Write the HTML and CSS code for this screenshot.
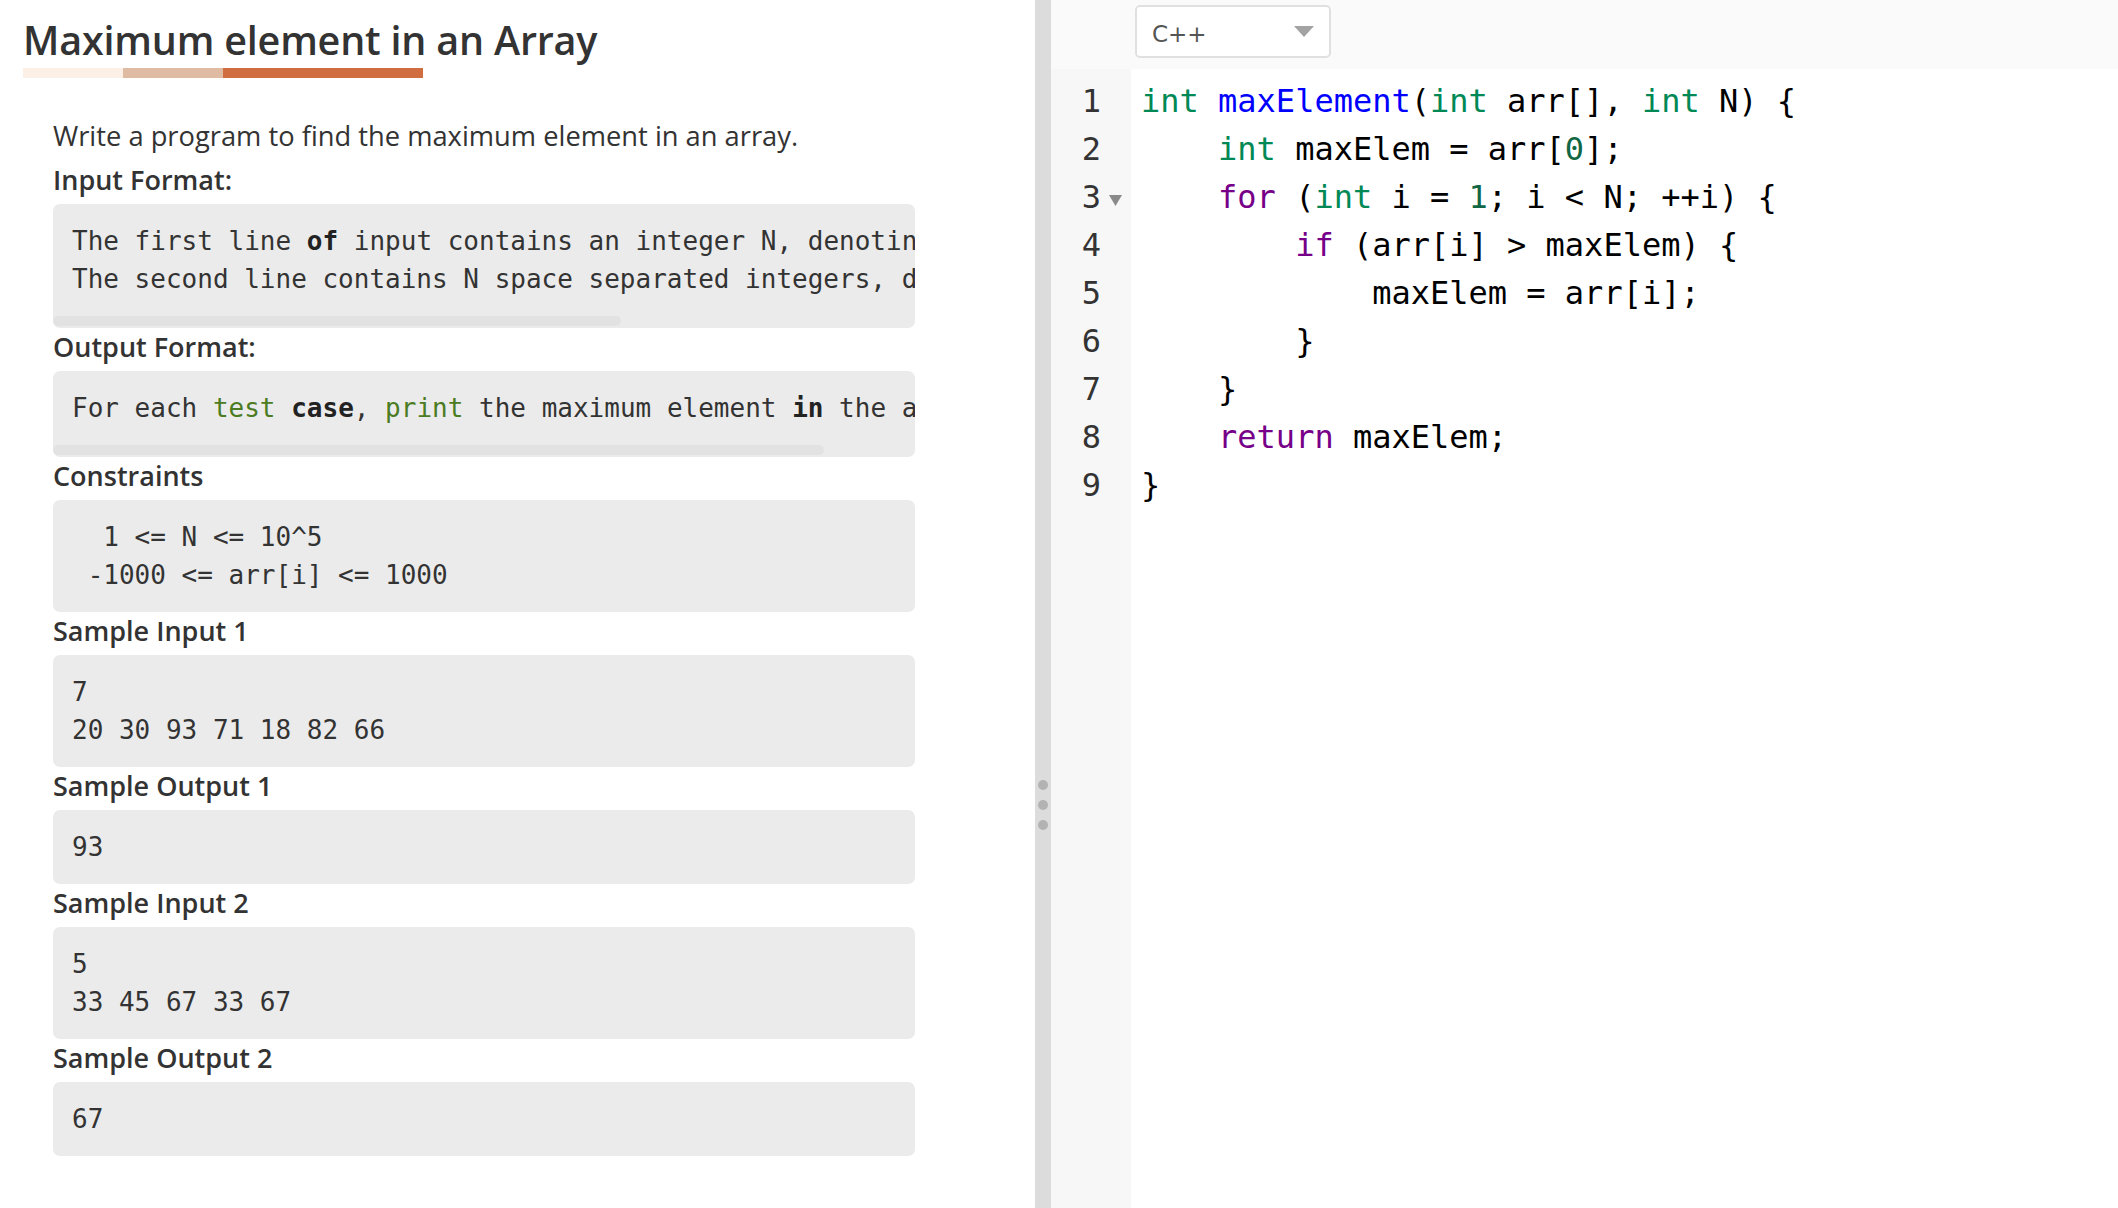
FILE: index.html
```html
<!DOCTYPE html>
<html lang="en">
<head>
<meta charset="utf-8">
<title>Maximum element in an Array</title>
<link rel="stylesheet" href="styles.css">
</head>
<body>
<div class="app">
  <section class="problem">
    <header class="head">
      <h1 class="title">Maximum element in an Array</h1>
      <div class="bars"><span class="bar bar-1"></span><span class="bar bar-2"></span><span class="bar bar-3"></span></div>
    </header>
    <div class="content">
      <p class="desc">Write a program to find the maximum element in an array.</p>
      <h3 class="label">Input Format:</h3>
      <div class="block">
        <pre class="block-text">The first line <b>of</b> input contains an integer N, denoting the size <b>of</b> the array.
The second line contains N space separated integers, denoting the array elements.</pre>
        <div class="hbar"><span class="thumb" style="width:568px"></span></div>
      </div>
      <h3 class="label">Output Format:</h3>
      <div class="block">
        <pre class="block-text">For each <span class="g">test</span> <b>case</b>, <span class="g">print</span> the maximum element <b>in</b> the array.</pre>
        <div class="hbar"><span class="thumb" style="width:771px"></span></div>
      </div>
      <h3 class="label">Constraints</h3>
      <div class="block">
        <pre class="block-text">  1 &lt;= N &lt;= 10^5
 -1000 &lt;= arr[i] &lt;= 1000</pre>
      </div>
      <h3 class="label">Sample Input 1</h3>
      <div class="block">
        <pre class="block-text">7
20 30 93 71 18 82 66</pre>
      </div>
      <h3 class="label">Sample Output 1</h3>
      <div class="block">
        <pre class="block-text">93</pre>
      </div>
      <h3 class="label">Sample Input 2</h3>
      <div class="block">
        <pre class="block-text">5
33 45 67 33 67</pre>
      </div>
      <h3 class="label">Sample Output 2</h3>
      <div class="block">
        <pre class="block-text">67</pre>
      </div>
    </div>
  </section>
  <div class="divider"><span class="dot"></span><span class="dot"></span><span class="dot"></span></div>
  <section class="editor">
    <div class="toolbar">
      <div class="select">
        <span class="select-text">C++</span>
        <svg class="caret" width="20" height="11" viewBox="0 0 20 11"><polygon points="0,0 20,0 10,11" fill="#a3a3a3"/></svg>
      </div>
    </div>
    <div class="code">
      <div class="gutter">
        <div class="gl"><span class="num">1</span><span class="fold"></span></div>
        <div class="gl"><span class="num">2</span><span class="fold"></span></div>
        <div class="gl"><span class="num">3</span><span class="fold"><svg width="13" height="11" viewBox="0 0 13 11"><polygon points="0,0 13,0 6.5,11" fill="#8a8a8a"/></svg></span></div>
        <div class="gl"><span class="num">4</span><span class="fold"></span></div>
        <div class="gl"><span class="num">5</span><span class="fold"></span></div>
        <div class="gl"><span class="num">6</span><span class="fold"></span></div>
        <div class="gl"><span class="num">7</span><span class="fold"></span></div>
        <div class="gl"><span class="num">8</span><span class="fold"></span></div>
        <div class="gl"><span class="num">9</span><span class="fold"></span></div>
      </div>
<pre class="lines"><span class="t">int</span> <span class="d">maxElement</span>(<span class="t">int</span> arr[], <span class="t">int</span> N) {
    <span class="t">int</span> maxElem = arr[<span class="n">0</span>];
    <span class="k">for</span> (<span class="t">int</span> i = <span class="n">1</span>; i &lt; N; ++i) {
        <span class="k">if</span> (arr[i] &gt; maxElem) {
            maxElem = arr[i];
        }
    }
    <span class="k">return</span> maxElem;
}</pre>
    </div>
  </section>
</div>
</body>
</html>
```

FILE: styles.css
```css
html, body {
  margin: 0;
  padding: 0;
  height: 100%;
  overflow: hidden;
  background: #ffffff;
}

.app {
  display: flex;
  height: 1208px;
  color: #333333;
  font-family: "Open Sans", "Noto Sans", sans-serif;
}

/* ---------- left: problem statement ---------- */
.problem {
  width: 1035px;
  flex: none;
  overflow: hidden;
}

.head {
  padding: 20px 0 0 23px;
}

.title {
  margin: 0;
  font-size: 39.5px;
  line-height: 41px;
  font-weight: 600;
  color: #333333;
  letter-spacing: -0.2px;
}

.bars {
  display: flex;
  margin-top: 7px;
  height: 10px;
}

.bar { display: block; height: 10px; }
.bar-1 { width: 100px; background: #fcefe6; }
.bar-2 { width: 100px; background: #e0bba3; }
.bar-3 { width: 200px; background: #d06e41; }

.content {
  padding: 39px 120px 40px 53px;
}

.desc {
  margin: 0 0 6px;
  font-size: 27.3px;
  line-height: 38px;
  color: #333333;
}

.label {
  margin: 0 0 5px;
  font-size: 27px;
  line-height: 38px;
  font-weight: 600;
  color: #333333;
}

.block {
  background: #ebebeb;
  border-radius: 7px;
  overflow: hidden;
}

.block-text {
  margin: 0;
  padding: 18px 19px;
  font-family: "DejaVu Sans Mono", monospace;
  font-size: 26px;
  line-height: 38px;
  color: #333333;
  white-space: pre;
  overflow: hidden;
}

.block-text b { font-weight: 700; color: #222222; }
.block-text .g { color: #4b7b22; }

.hbar {
  height: 12px;
}

.thumb {
  display: block;
  height: 10px;
  background: #e2e2e2;
  border-radius: 5px;
}

/* ---------- divider ---------- */
.divider {
  width: 16px;
  flex: none;
  background: #dcdcdc;
  display: flex;
  flex-direction: column;
  align-items: center;
  gap: 10px;
  padding-top: 780px;
  box-sizing: border-box;
}

.dot {
  width: 10px;
  height: 10px;
  border-radius: 50%;
  background: #b3b3b3;
}

/* ---------- right: editor ---------- */
.editor {
  flex: 1;
  display: flex;
  flex-direction: column;
  min-width: 0;
}

.toolbar {
  height: 69px;
  flex: none;
  background: #fafafa;
  padding: 5px 0 0 84px;
  box-sizing: border-box;
}

.select {
  width: 196px;
  height: 53px;
  box-sizing: border-box;
  background: #ffffff;
  border: 2px solid #e0e0e0;
  border-radius: 5px;
  display: flex;
  align-items: center;
  justify-content: space-between;
  padding: 4px 15px 0 15px;
}

.select-text {
  font-family: "DejaVu Sans", sans-serif;
  font-size: 23px;
  color: #555555;
}

.caret { display: block; margin-top: -4px; }

.code {
  flex: 1;
  display: flex;
}

.gutter {
  width: 80px;
  flex: none;
  background: #f7f7f7;
  padding-top: 8px;
  box-sizing: border-box;
}

.gl {
  display: flex;
  height: 48px;
  align-items: center;
}

.num {
  width: 50px;
  text-align: right;
  font-family: "DejaVu Sans Mono", monospace;
  font-size: 32px;
  line-height: 48px;
  color: #333333;
}

.fold {
  width: 30px;
  display: flex;
  justify-content: center;
  padding-top: 7px;
}

.fold svg { display: block; margin-left: -2px; }

.lines {
  margin: 0;
  padding: 8px 0 0 10px;
  font-family: "DejaVu Sans Mono", monospace;
  font-size: 32px;
  line-height: 48px;
  color: #000000;
  white-space: pre;
}

.lines .t { color: #008855; }
.lines .d { color: #0000ff; }
.lines .k { color: #770088; }
.lines .n { color: #116644; }
```
